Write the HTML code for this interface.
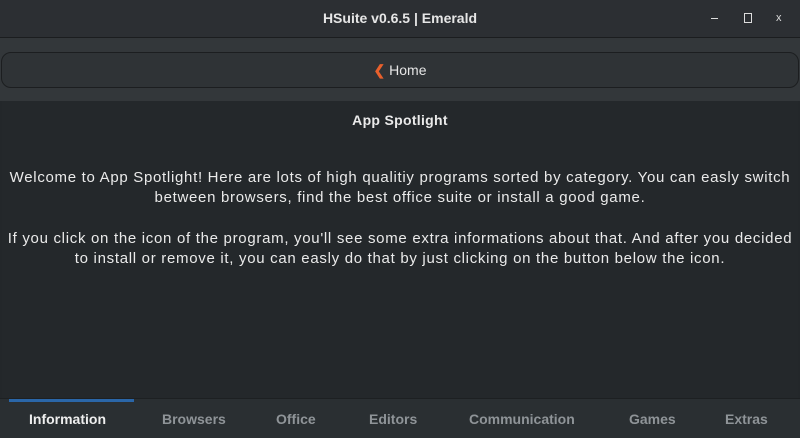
<!DOCTYPE html><html><head><style>
body{margin:0;width:800px;height:437px;overflow:hidden;background:#23272a;font-family:"Liberation Sans",sans-serif;position:relative}
.t{position:absolute;left:0;top:0;width:800px;height:37px;background:#2c2f33;border-bottom:1px solid #1b1d1f;color:#e6e6e6;font-weight:bold;font-size:14px;text-align:center;line-height:37px}
.tb{position:absolute;top:38px;left:0;width:800px;height:63px;background:#33373a}
.btn{position:absolute;left:1px;top:14px;width:796px;height:34px;border:1px solid #1c1e20;border-radius:10px;background:#2f3336;color:#e6e6e6;font-size:14px;text-align:center;line-height:34px}
.c{position:absolute;top:101px;left:2px;width:796px;height:297px;background:#24282b;color:#eaeaea;font-size:15px;letter-spacing:0.7px;text-align:center}
.tabs{position:absolute;top:398px;left:0;width:800px;height:39px;background:#2a2f32;border-top:1px solid #1d2022}
.tabs span{position:absolute;top:12px;font-weight:bold;font-size:14px;color:#8f9498}
</style></head><body>
<div class="t">HSuite v0.6.5 | Emerald
<span style="position:absolute;left:711px;top:18px;width:7px;height:1px;background:#ddd"></span>
<span style="position:absolute;left:744px;top:13px;width:6px;height:8px;border:1px solid #ddd"></span>
<span style="position:absolute;left:776px;top:0;font-size:11px;font-weight:normal;color:#ddd">x</span></div>
<div class="tb"><div class="btn"><span style="color:#e8602c;font-weight:bold">&#x276E;</span> Home</div></div>
<div class="c">
<div style="position:absolute;top:11px;width:100%;font-weight:bold;font-size:14px;letter-spacing:0.3px">App Spotlight</div>
<div style="position:absolute;top:67px;width:100%;line-height:20px">Welcome to App Spotlight! Here are lots of high qualitiy programs sorted by category. You can easly switch<br>between browsers, find the best office suite or install a good game.</div>
<div style="position:absolute;top:128px;width:100%;line-height:20px">If you click on the icon of the program, you'll see some extra informations about that. And after you decided<br>to install or remove it, you can easly do that by just clicking on the button below the icon.</div>
</div>
<div class="tabs">
<div style="position:absolute;left:9px;top:0;width:125px;height:3px;background:#2a66a8"></div>
<span style="left:29px;color:#eee">Information</span><span style="left:162px">Browsers</span><span style="left:276px">Office</span><span style="left:369px">Editors</span><span style="left:469px">Communication</span><span style="left:629px">Games</span><span style="left:725px">Extras</span>
</div>
</body></html>
